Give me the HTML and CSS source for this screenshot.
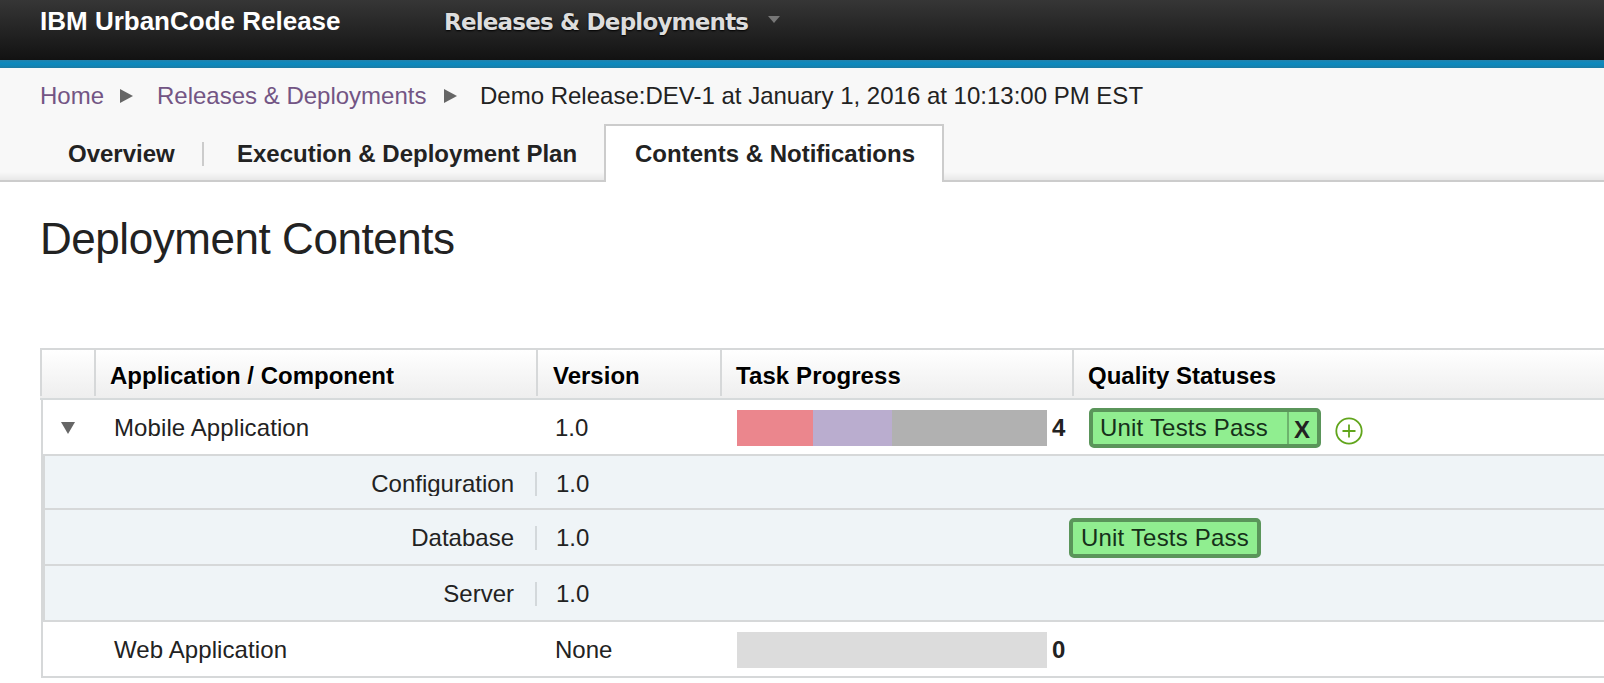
FILE: index.html
```html
<!DOCTYPE html>
<html lang="en">
<head>
<meta charset="utf-8">
<title>IBM UrbanCode Release</title>
<link rel="stylesheet" href="styles.css">
</head>
<body>
<header class="topbar">
  <div class="brand">IBM UrbanCode Release</div>
  <div class="nav">Releases &amp; Deployments</div>
  <svg class="caret" viewBox="0 0 12 7"><path d="M0 0H12L6 7Z"/></svg>
</header>
<section class="subhead">
  <nav class="crumbs">
    <a class="crumb-home">Home</a>
    <svg class="arrow" viewBox="0 0 13 14"><path d="M0 0L13 7L0 14Z"/></svg>
    <a class="crumb-rel">Releases &amp; Deployments</a>
    <svg class="arrow" viewBox="0 0 13 14"><path d="M0 0L13 7L0 14Z"/></svg>
    <span class="crumb-here">Demo Release:DEV-1 at January 1, 2016 at 10:13:00 PM EST</span>
  </nav>
  <div class="tabs">
    <div class="tab tab-first">Overview</div>
    <div class="tab-sep"></div>
    <div class="tab tab-plan">Execution &amp; Deployment Plan</div>
    <div class="tab tab-active">Contents &amp; Notifications</div>
    <div class="tab-fill"></div>
  </div>
</section>
<main>
  <h1>Deployment Contents</h1>
  <div class="table">
    <div class="thead">
      <div class="th"></div>
      <div class="th th-app">Application / Component</div>
      <div class="th th-ver">Version</div>
      <div class="th th-task">Task Progress</div>
      <div class="th th-q">Quality Statuses</div>
    </div>
    <div class="tbody">
      <div class="row">
        <div class="toggle"><svg viewBox="0 0 14 12"><path d="M0 0H14L7 12Z"/></svg></div>
        <div class="name">Mobile Application</div>
        <div class="ver">1.0</div>
        <div class="progress"><div class="bar"><i class="red" style="width:76px"></i><i class="purple" style="width:79px"></i><i class="gray" style="width:155px"></i></div><b>4</b></div>
        <div class="status"><div class="badge badge-rm"><span>Unit Tests Pass</span><b>X</b></div><svg class="plus" viewBox="0 0 28 28"><circle cx="14" cy="14" r="12.7"/><path d="M7.5 14H20.5M14 7.5V20.5"/></svg></div>
      </div>
      <div class="subs">
        <div class="sub sub-short"><div class="sub-name">Configuration</div><div class="sub-sep"></div><div class="sub-ver">1.0</div></div>
        <div class="sub"><div class="sub-name">Database</div><div class="sub-sep"></div><div class="sub-ver">1.0</div><div class="badge">Unit Tests Pass</div></div>
        <div class="sub"><div class="sub-name">Server</div><div class="sub-sep"></div><div class="sub-ver">1.0</div></div>
      </div>
      <div class="row">
        <div class="toggle"></div>
        <div class="name">Web Application</div>
        <div class="ver">None</div>
        <div class="progress"><div class="bar bar-empty"></div><b>0</b></div>
        <div class="status"></div>
      </div>
    </div>
  </div>
</main>
</body>
</html>
```
FILE: styles.css
```css
* { box-sizing: border-box; }
body {
  margin: 0;
  height: 683px;
  overflow: hidden;
  background: #fff;
  color: #222;
  font: 24px/28px "Liberation Sans", Arial, sans-serif;
  white-space: nowrap;
}
svg { display: block; flex: none; }

.topbar {
  display: flex;
  height: 68px;
  padding-left: 40px;
  background: linear-gradient(#363636, #121212) top / 100% 60px no-repeat, linear-gradient(#2583ac, #0f89bd 35%, #0f87b9 65%, #1f7ba2) bottom / 100% 8px no-repeat;
  font-weight: bold;
}
.brand { width: 404px; padding-top: 7px; color: #fff; font-size: 26px; }
.nav {
  width: 324px;
  padding-top: 8px;
  color: #ddd;
  font-family: "DejaVu Sans", Verdana, sans-serif;
  font-size: 23px;
  letter-spacing: -0.8px;
  text-shadow: 0 1px 2px #000;
}
.caret { width: 12px; height: 7px; margin: 16px 0 0; fill: #777; }

.subhead {
  display: flex;
  flex-direction: column;
  height: 114px;
  background: #f8f8f8;
}
.crumbs { display: flex; height: 56px; padding: 14px 0 0 40px; }
.crumbs a { color: #735584; }
.crumb-home { width: 80px; }
.arrow { width: 13px; height: 14px; margin-top: 7px; fill: #666; }
.crumb-rel { width: 311px; padding-left: 24px; }
.crumb-here { padding-left: 23px; }

.tabs { display: flex; height: 58px; font-weight: bold; }
.tab { padding-top: 16px; border-bottom: 2px solid #ccc; background: linear-gradient(#f8f8f8, #e8e8e8) bottom / 100% 8px no-repeat; }
.tab-first { width: 202px; padding-left: 68px; }
.tab-sep {
  width: 2px;
  border-bottom: 2px solid #ccc;
  background: linear-gradient(#ccc, #ccc) 0 18px / 2px 24px no-repeat, linear-gradient(#f8f8f8, #e8e8e8) bottom / 100% 8px no-repeat;
}
.tab-plan { width: 400px; padding-left: 33px; }
.tab-active { width: 340px; padding: 14px 0 0 29px; border: 2px solid #ccc; border-bottom: 0; background: #fff; }
.tab-fill { flex: 1; border-bottom: 2px solid #ccc; background: linear-gradient(#f8f8f8, #e8e8e8) bottom / 100% 8px no-repeat; }

main { padding-left: 40px; }
h1 { height: 166px; margin: 0; padding-top: 32px; font-size: 44px; font-weight: normal; line-height: 50px; letter-spacing: -0.45px; }

.thead {
  display: grid;
  grid-template-columns: 56px 442px 184px 352px 1fr;
  height: 52px;
  padding-bottom: 2px;
  border-top: 2px solid #d6d8d9;
  border-bottom: 2px solid #d6dadb;
  background: linear-gradient(#fff, #eee);
  color: #000;
  font-weight: bold;
}
.th { padding-top: 12px; border-right: 2px solid #d6d8d9; text-shadow: 1px 1px 0 #fff; }
.th:first-child { border-left: 2px solid #d6d8d9; }
.th:last-child { border-right: 0; }
.th-app { padding-left: 14px; }
.th-ver { padding-left: 15px; }
.th-task { padding-left: 14px; letter-spacing: 0.1px; }
.th-q { padding-left: 14px; }

.tbody { margin-left: 1px; border-left: 2px solid #d6d8d9; }
.row {
  display: grid;
  grid-template-columns: 71px 441px 182px 352px 1fr;
  height: 56px;
  border-bottom: 2px solid #d6d8d9;
}
.name, .ver { padding-top: 14px; }
.name { letter-spacing: 0.1px; }
.toggle svg { width: 14px; height: 12px; margin: 22px 0 0 18px; fill: #666; }
.progress { display: flex; padding-top: 10px; }
.bar { display: flex; width: 310px; height: 36px; }
.bar-empty { background: #dcdcdc; }
.red { background: #eb868d; }
.purple { background: #baadcf; }
.gray { background: #b1b1b1; }
.progress b { padding: 4px 0 0 5px; }
.status { display: flex; padding-top: 8px; }
.badge {
  height: 40px;
  padding: 2px 8px 0;
  border: 4px solid #5a955a;
  border-radius: 5px;
  background: #90ee90;
  color: #16301a;
  letter-spacing: 0.2px;
}
.badge-rm { display: flex; width: 232px; padding: 0; }
.badge-rm span { width: 194px; padding: 2px 0 0 7px; }
.badge-rm b { flex: 1; padding: 4px 0 0 5px; border-left: 2px solid #6db36d; color: #222; }
.plus { width: 28px; height: 28px; margin: 9px 0 0 14px; fill: none; stroke: #61a51c; stroke-width: 1.8; }

.subs { border-left: 2px solid #d6d8d9; background: #eff4f7; }
.sub { display: flex; height: 56px; padding-top: 14px; border-bottom: 2px solid #d6d8d9; }
.sub-short { height: 54px; }
.sub-name { width: 470px; height: 26px; padding-right: 1px; overflow: hidden; text-align: right; }
.sub-sep { width: 2px; height: 24px; margin: 2px 0 0 20px; background: #d3d8db; }
.sub-ver { width: 532px; padding-left: 19px; }
.sub .badge { width: 192px; margin-top: -6px; }
```
